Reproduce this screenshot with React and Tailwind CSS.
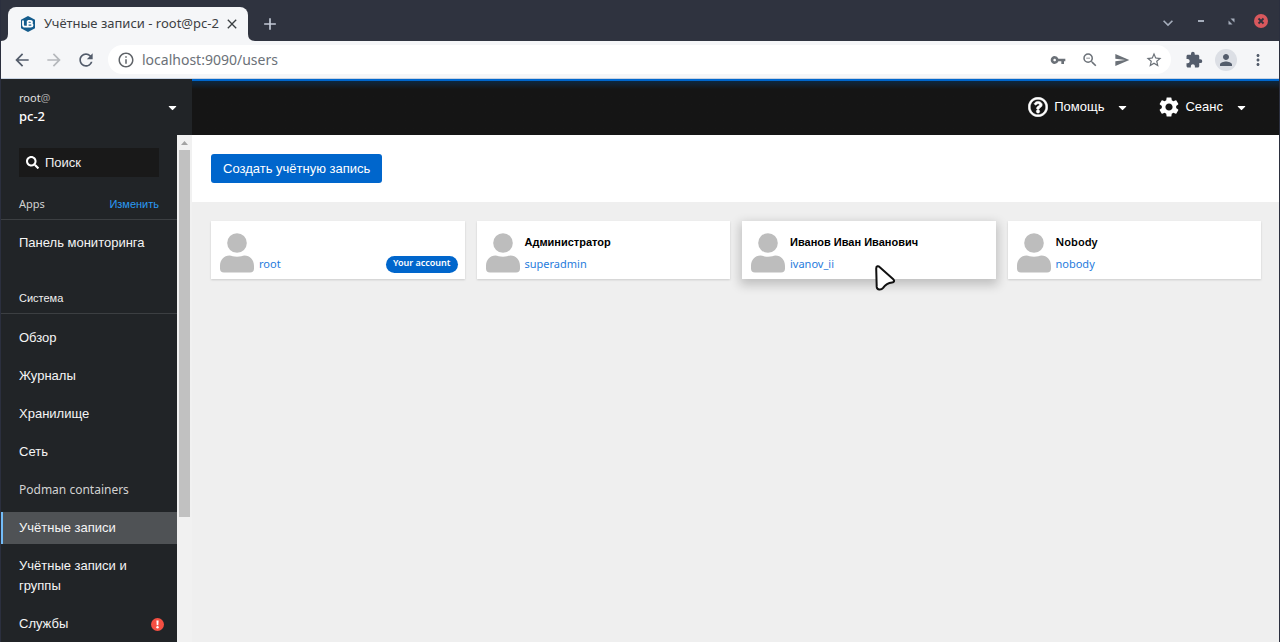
import React from "react";
import {
  MdAdd,
  MdArrowBack,
  MdArrowForward,
  MdClose,
  MdExtension,
  MdInfoOutline,
  MdKeyboardArrowDown,
  MdMoreVert,
  MdPerson,
  MdRefresh,
  MdSend,
  MdSettings,
  MdStarBorder,
  MdVpnKey,
  MdZoomOut,
} from "react-icons/md";
import { FaCaretDown, FaRegQuestionCircle, FaSearch } from "react-icons/fa";

const systemItems = [
  { label: "Обзор" },
  { label: "Журналы" },
  { label: "Хранилище" },
  { label: "Сеть" },
  { label: "Podman containers", latin: true },
  { label: "Учётные записи", active: true },
  { label: "Учётные записи и группы" },
  { label: "Службы", alert: true },
];

const accounts = [
  { name: "", login: "root", current: true },
  { name: "Администратор", login: "superadmin" },
  { name: "Иванов Иван Иванович", login: "ivanov_ii", hovered: true },
  { name: "Nobody", login: "nobody", latin: true },
];

function Favicon() {
  return (
    <svg viewBox="0 0 16 16" className="size-4 shrink-0" aria-hidden="true">
      <path d="M8 0l7 3.8v8.4L8 16l-7-3.8V3.8z" fill="#145c8c" />
      <g fill="none" stroke="#fff" strokeWidth="1.8">
        <path d="M3 4.500v4.300q0 1.900 1.900 1.900h2.200" />
        <path d="M7.700 4.800v5.900h2.700q2.100 0 2.100-1.600t-2.100-1.500H8M7.700 4.900h2.500q1.800 0 1.800 1.300t-1.800 1.400" />
      </g>
    </svg>
  );
}

function TabFoot({ flip }) {
  return (
    <svg viewBox="0 0 7 7" className={flip ? "size-[7px] -scale-x-100" : "size-[7px]"} aria-hidden="true">
      <path d="M0 0Q0 7 7 7H0z" fill="#f5f6f8" />
    </svg>
  );
}

function TitleBar() {
  return (
    <div className="flex h-[41px] shrink-0 items-end bg-[#2f333f]">
      <div className="flex w-[7px] justify-end">
        <TabFoot flip />
      </div>
      <div className="flex h-[34px] w-60 items-center rounded-t-lg bg-[#f5f6f8] pr-2 pl-3 text-[#3c4043]">
        <Favicon />
        <span className="ml-2 flex-1 text-[13px] whitespace-nowrap">Учётные записи - root@pc-2</span>
        <button type="button" aria-label="Закрыть вкладку">
          <MdClose className="size-4" />
        </button>
      </div>
      <TabFoot />
      <button type="button" aria-label="Новая вкладка" className="mb-[7px] ml-[5px] text-[#c3c9d6]">
        <MdAdd className="size-5" />
      </button>
      <div className="mb-2 ml-auto flex items-center pr-[11px] text-[#a5adbb]">
        <button type="button" aria-label="Поиск вкладок" className="mt-1 mr-5">
          <MdKeyboardArrowDown className="size-5" />
        </button>
        <button type="button" aria-label="Свернуть" className="mr-6">
          <svg viewBox="0 0 6 6" className="size-1.5">
            <path d="M0 2h6v2H0z" fill="currentColor" />
          </svg>
        </button>
        <button type="button" aria-label="Развернуть" className="mr-[19px]">
          <svg viewBox="0 0 7 7" className="size-[7px]">
            <path d="M2.500 0.500h4v4zM0.500 2.500l4 4h-4z" fill="currentColor" />
          </svg>
        </button>
        <button
          type="button"
          aria-label="Закрыть окно"
          className="flex size-3.5 items-center justify-center rounded-full bg-[#d8585d] text-[#2f333f]"
        >
          <svg viewBox="0 0 8 8" className="size-2">
            <path d="M1.500 1.500l5 5m0-5l-5 5" stroke="currentColor" strokeWidth="1.800" />
          </svg>
        </button>
      </div>
    </div>
  );
}

function BrowserBar() {
  return (
    <div className="flex h-[38px] shrink-0 items-center border-b border-[#c8d3e2] bg-[#f5f6f8] pr-3 pl-[11px] text-[#535c6b]">
      <button type="button" aria-label="Назад">
        <MdArrowBack className="size-5" />
      </button>
      <button type="button" aria-label="Вперёд" className="ml-3 text-[#b5b8bc]">
        <MdArrowForward className="size-5" />
      </button>
      <button type="button" aria-label="Обновить" className="ml-3">
        <MdRefresh className="size-5" />
      </button>
      <div className="ml-3 flex h-[29px] flex-1 items-center rounded-full bg-white pr-2 pl-[9px] text-[#6b7178]">
        <MdInfoOutline className="size-[18px] shrink-0 text-[#5f6368]" />
        <input
          aria-label="Адрес"
          defaultValue="localhost:9090/users"
          className="ml-[7px] min-w-0 flex-1 bg-transparent text-sm outline-none"
        />
        <div className="flex items-center gap-[15px]">
          <button type="button" aria-label="Пароли">
            <MdVpnKey className="size-4" />
          </button>
          <button type="button" aria-label="Масштаб">
            <MdZoomOut className="size-[18px]" />
          </button>
          <button type="button" aria-label="Отправить">
            <MdSend className="size-4" />
          </button>
          <button type="button" aria-label="В закладки">
            <MdStarBorder className="size-[18px]" />
          </button>
        </div>
      </div>
      <button type="button" aria-label="Расширения" className="ml-3.5">
        <MdExtension className="size-[18px]" />
      </button>
      <button
        type="button"
        aria-label="Профиль"
        className="ml-3 flex size-[22px] items-center justify-center rounded-full bg-[#dcdfe5]"
      >
        <MdPerson className="size-[18px]" />
      </button>
      <button type="button" aria-label="Меню" className="ml-3">
        <MdMoreVert className="size-[18px]" />
      </button>
    </div>
  );
}

function AlertIcon() {
  return (
    <svg viewBox="0 0 13 13" className="size-[13px] shrink-0" aria-hidden="true">
      <circle cx="6.500" cy="6.500" r="6.500" fill="#f54f42" />
      <path d="M5.400 2.500h2.200l-.3 4.700H5.700z" fill="#fff" />
      <circle cx="6.500" cy="9.300" r="1.200" fill="#fff" />
    </svg>
  );
}

function NavItem({ label, active, latin, alert }) {
  return (
    <li>
      <a
        href="#"
        className={
          "flex items-center border-l-2 py-1.5 pr-[13px] pl-4 leading-5 " +
          (active ? "border-[#73bcf7] bg-[#4f5255] " : "border-transparent ") +
          (latin ? "font-['Noto_Sans',sans-serif] text-xs/5 text-[#d2d2d2]" : "text-[13px] text-[#f5f5f5]")
        }
      >
        <span className="flex-1">{label}</span>
        {alert && <AlertIcon />}
      </a>
    </li>
  );
}

function Sidebar() {
  return (
    <aside className="flex w-[191px] shrink-0 flex-col bg-[#212427] text-white">
      <button
        type="button"
        className="flex h-14 shrink-0 items-center justify-between pr-[13px] pl-[18px] text-left font-['Noto_Sans',sans-serif]"
      >
        <span className="flex flex-col">
          <span className="text-[11px] leading-[18px] text-[#e0e0e0]">
            root<span className="text-[#a0a0a0]">@</span>
          </span>
          <span className="text-[13px] leading-[18px] font-medium">pc-2</span>
        </span>
        <FaCaretDown className="size-[13px]" />
      </button>
      <div className="flex min-h-0 flex-1">
        <nav className="min-w-0 flex-1 overflow-hidden">
          <label className="mx-[18px] mt-[13px] flex h-[29px] items-center bg-[#191919] pl-[7px]">
            <FaSearch className="size-[13px] shrink-0" />
            <input
              aria-label="Поиск"
              placeholder="Поиск"
              className="ml-1.5 w-full min-w-0 bg-transparent text-[13px] outline-none placeholder:text-[#f0f0f0]"
            />
          </label>
          <div className="mt-4 flex h-[27px] items-center justify-between border-b border-[#3c3f42] px-[18px] pb-1 text-[11px]">
            <h2 className="font-['Noto_Sans',sans-serif] text-[#d2d2d2]">Apps</h2>
            <a href="#" className="text-[#2b9af3]">
              Изменить
            </a>
          </div>
          <ul className="mt-[7px]">
            <NavItem label="Панель мониторинга" />
          </ul>
          <h2 className="mt-[27px] flex h-7 items-center border-b border-[#3c3f42] px-[18px] pb-0.5 text-[11px] text-[#f0f0f0]">
            Система
          </h2>
          <ul className="mt-2 flex flex-col gap-1.5">
            {systemItems.map((item) => (
              <NavItem key={item.label} {...item} />
            ))}
          </ul>
        </nav>
        <div className="flex w-[15px] shrink-0 flex-col items-center bg-[#f1f1f1]" aria-hidden="true">
          <svg viewBox="0 0 15 15" className="size-[15px] shrink-0">
            <path d="M4 10l3.500-4 3.500 4z" fill="#a3a3a3" />
          </svg>
          <div className="h-[72.4%] w-[11px] bg-[#c1c1c1]" />
        </div>
      </div>
    </aside>
  );
}

function TopBar() {
  return (
    <header className="h-14 shrink-0 border-t-2 border-[#0066cc] bg-[#151515] text-white">
      <div className="flex h-full items-center justify-end bg-linear-to-b from-[#0b2740] to-[#151515] to-15% pr-[31px] pb-0.5 text-[13px]">
        <button type="button" className="flex items-center">
          <FaRegQuestionCircle className="size-5" stroke="currentColor" strokeWidth="16" />
          <span className="ml-1.5">Помощь</span>
          <FaCaretDown className="ml-3 size-[13px]" />
        </button>
        <button type="button" className="ml-7 flex items-center">
          <MdSettings className="size-6" />
          <span className="ml-1">Сеанс</span>
          <FaCaretDown className="ml-3 size-[13px]" />
        </button>
      </div>
    </header>
  );
}

function Avatar() {
  return (
    <svg viewBox="0 0 34 40" className="h-10 w-[34px] shrink-0" aria-hidden="true">
      <circle cx="17" cy="10" r="9.800" fill="#bdbdbd" />
      <path
        d="M0 35.500V33C0 27 4 22.500 9.500 22.500c2 0 4 1.300 7.500 1.300s5.500-1.300 7.500-1.300C30 22.500 34 27 34 33v2.500q0 4-4 4H4q-4 0-4-4z"
        fill="#bdbdbd"
      />
    </svg>
  );
}

function Pointer() {
  return (
    <svg viewBox="0 0 22 27" className="absolute top-[43px] left-[132px] z-10 h-[27px] w-[22px]" aria-hidden="true">
      <path
        d="M2.200 4.500C2.200 2 4.200 1.400 5.800 3.200L19.300 15.200c1.600 1.600.8 3.300-1.200 3.400-4 .3-6.600 1.800-9 5.300-2 2.600-6 2.200-6.400-1z"
        fill="#fff"
        stroke="#111"
        strokeWidth="2"
        strokeLinejoin="round"
      />
    </svg>
  );
}

function AccountCard({ name, login, current, hovered, latin }) {
  return (
    <li
      className={
        "relative flex h-[58px] bg-white pt-3 pr-[7px] pl-[9px] " +
        (hovered ? "shadow-[0_4px_10px_2px_rgba(3,3,3,0.2)]" : "shadow-[0_1px_2px_rgba(3,3,3,0.15)]")
      }
    >
      <Avatar />
      <div className="ml-[5px] flex flex-1 flex-col">
        <h3
          className={
            "h-[22px] text-[11px] leading-[18px] text-black " +
            (latin ? "font-['Noto_Sans',sans-serif] font-semibold" : "font-bold")
          }
        >
          {name}
        </h3>
        <a href="#" className="font-['Noto_Sans',sans-serif] text-[11px] leading-[18px] text-[#1f7bdc]">
          {login}
        </a>
      </div>
      {current && (
        <span className="mt-[23px] h-[17px] rounded-full bg-[#0066cc] px-[7px] font-['Noto_Sans',sans-serif] text-[9px] leading-[14px] font-semibold text-white">
          Your account
        </span>
      )}
      {hovered && <Pointer />}
    </li>
  );
}

export default function App() {
  return (
    <div className="flex h-screen flex-col overflow-hidden border-x border-[#2b2f3e] bg-[#efefef] font-['Noto_Sans',sans-serif]">
      <TitleBar />
      <BrowserBar />
      <div className="flex min-h-0 flex-1 font-['Liberation_Sans',Arial,sans-serif]">
        <Sidebar />
        <div className="flex min-w-0 flex-1 flex-col">
          <TopBar />
          <main className="flex-1">
            <div className="bg-white px-[19px] py-[19px]">
              <button
                type="button"
                className="block h-[29px] rounded-[3px] bg-[#0066cc] px-3 text-[13px] text-white"
              >
                Создать учётную запись
              </button>
            </div>
            <ul className="grid grid-cols-4 gap-3 py-[19px] pr-[18px] pl-[19px]">
              {accounts.map((account) => (
                <AccountCard key={account.login} {...account} />
              ))}
            </ul>
          </main>
        </div>
      </div>
    </div>
  );
}
